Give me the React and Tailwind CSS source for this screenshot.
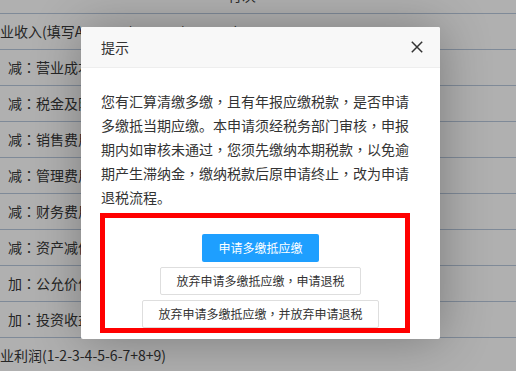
const rows = [
  { text: "业收入(填写A101010\\101020\\103000)", indent: false },
  { text: "减：营业成本(填写A102010\\103000)", indent: true },
  { text: "减：税金及附加", indent: true },
  { text: "减：销售费用(填写A104000)", indent: true },
  { text: "减：管理费用(填写A104000)", indent: true },
  { text: "减：财务费用(填写A104000)", indent: true },
  { text: "减：资产减值损失", indent: true },
  { text: "加：公允价值变动收益", indent: true },
  { text: "加：投资收益", indent: true },
  { text: "业利润(1-2-3-4-5-6-7+8+9)", indent: false },
];

// comma and colon sit centred in the cell in the screenshot, as in the TC face
function Punct({ text }) {
  return text.split(/([，：])/).map((part, i) =>
    part === "，" || part === "：" ? (
      <span key={i} className="font-['Noto_Sans_CJK_TC',sans-serif]">
        {part}
      </span>
    ) : (
      part
    )
  );
}

function CloseIcon() {
  return (
    <svg width="12" height="12" viewBox="0 0 12 12" fill="none">
      <path d="M0.8 0.8L11.2 11.2M11.2 0.8L0.8 11.2" stroke="#333" strokeWidth="1.5" />
    </svg>
  );
}

function TableBehind() {
  return (
    <div className="flex flex-col text-[14px] text-[#262626]">
      <div className="flex h-[13px] items-start overflow-hidden">
        <span className="-mt-[12px] ml-[228px] leading-[14px]">行次</span>
      </div>
      {rows.map((row) => (
        <div
          key={row.text}
          className={`flex h-9 shrink-0 items-center border-t border-[#7f8a98] ${row.indent ? "pl-[8px]" : "pl-0"}`}
        >
          <span className="whitespace-nowrap">
            <Punct text={row.text} />
          </span>
        </div>
      ))}
    </div>
  );
}

function Dialog() {
  return (
    <div className="absolute left-[81px] top-[27px] w-[359px] rounded-[2px] bg-white shadow-[1px_1px_50px_rgba(0,0,0,0.3)]">
      <div className="flex h-[41px] items-center justify-between rounded-t-[2px] border-b border-[#eeeeee] bg-[#f8f8f8] pl-[20px] pr-[17px]">
        <span className="text-[14px] text-[#333]">提示</span>
        <CloseIcon />
      </div>

      <div className="relative px-[20px] pb-[11px] pt-[21px]">
        <p className="text-[14px] leading-[24px] text-[#333]">
          <Punct text="您有汇算清缴多缴，且有年报应缴税款，是否申请多缴抵当期应缴。本申请须经税务部门审核，申报期内如审核未通过，您须先缴纳本期税款，以免逾期产生滞纳金，缴纳税款后原申请终止，改为申请退税流程。" />
        </p>

        <div className="mt-[25px] flex flex-col items-center gap-[5px] text-[12px]">
          <button type="button" className="h-[28px] rounded-[2px] bg-[#1e9fff] px-4 text-white">
            申请多缴抵应缴
          </button>
          <button
            type="button"
            className="h-[28px] rounded-[2px] border border-[#dedede] bg-white px-[15px] text-[#333]"
          >
            <Punct text="放弃申请多缴抵应缴，申请退税" />
          </button>
          <button
            type="button"
            className="h-[28px] rounded-[2px] border border-[#dedede] bg-white px-[15px] text-[#333]"
          >
            <Punct text="放弃申请多缴抵应缴，并放弃申请退税" />
          </button>
        </div>

        <div className="pointer-events-none absolute left-[19px] top-[145px] h-[120px] w-[310px] border-[5px] border-[#ff0000]" />
      </div>
    </div>
  );
}

export default function App() {
  return (
    <div className="relative h-[371px] w-full overflow-hidden bg-[#b0b0b0] font-['Noto_Sans_CJK_SC','Noto_Sans',sans-serif]">
      <TableBehind />
      <Dialog />
    </div>
  );
}
